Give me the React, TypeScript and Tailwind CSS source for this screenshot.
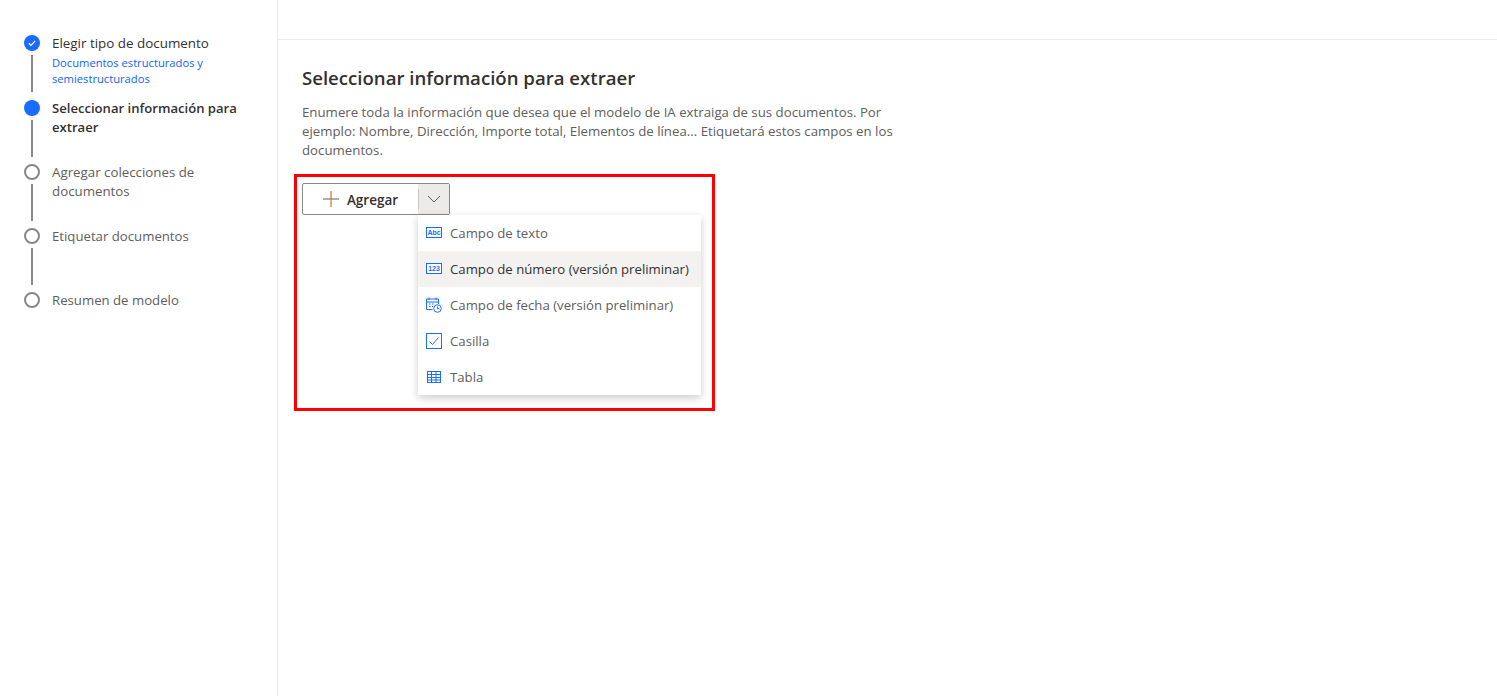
import React from "react";

const font = { fontFamily: '"Open Sans", "Noto Sans", sans-serif' };

function Check() {
  return (
    <svg width="16" height="16" viewBox="0 0 16 16" fill="none">
      <circle cx="8" cy="8" r="8" fill="#1a6cff" />
      <path d="M4.8 8.2 7 10.3 11.2 5.8" stroke="#fff" strokeWidth="1.2" />
    </svg>
  );
}

type StepProps = {
  state: "done" | "active" | "todo";
  last?: boolean;
  h: string;
  children: React.ReactNode;
};

function Step({ state, last, h, children }: StepProps) {
  return (
    <div className={`flex ${h}`}>
      <div className="flex w-[16px] flex-col items-center">
        {state === "done" && <Check />}
        {state === "active" && <div className="h-[16px] w-[16px] shrink-0 rounded-full bg-[#1a6cff]" />}
        {state === "todo" && <div className="h-[16px] w-[16px] shrink-0 rounded-full border-2 border-[#8a8886]" />}
        {!last && <div className="mt-[4px] h-[37px] w-[2px] bg-[#8a8886]" />}
      </div>
      <div className="ml-[12px] w-[195px]">{children}</div>
    </div>
  );
}

const iconBlue = "#1a6cff";

function AbcIcon() {
  return (
    <svg width="16" height="16" viewBox="0 0 16 16" fill="none">
      <rect x="0.5" y="2.5" width="15" height="10" fill="#fff" stroke={iconBlue} />
      <text x="8" y="10.2" textAnchor="middle" fontSize="7" fontWeight="700" fill={iconBlue} fontFamily="Liberation Sans">Abc</text>
    </svg>
  );
}
function NumIcon() {
  return (
    <svg width="16" height="16" viewBox="0 0 16 16" fill="none">
      <rect x="0.5" y="2.5" width="15" height="10" fill="#fff" stroke={iconBlue} />
      <text x="8" y="10.2" textAnchor="middle" fontSize="7" fontWeight="700" fill={iconBlue} fontFamily="Liberation Sans">123</text>
    </svg>
  );
}
function DateIcon() {
  return (
    <svg width="16" height="16" viewBox="0 0 16 16" fill="none" stroke={iconBlue}>
      <path d="M6.5 12.5H.5V2h12v5" />
      <path d="M.5 5h12" />
      <path d="M3 .5v2.5M10 .5v2.5" />
      <path d="M3 7h1.5M6 7h1.5M3 9.5h1.5M6 9.5h1" />
      <circle cx="11.5" cy="11.5" r="3.8" fill="#fff" />
      <path d="M11.5 9.5v2.2h2" />
    </svg>
  );
}
function BoxIcon() {
  return (
    <svg width="16" height="16" viewBox="0 0 16 16" fill="none" stroke={iconBlue}>
      <rect x="0.5" y="0.5" width="15" height="15" />
      <path d="M3.5 8.5 6.5 11.5 12.5 4.5" />
    </svg>
  );
}
function TableIcon() {
  return (
    <svg width="16" height="16" viewBox="0 0 16 16" fill="none" stroke={iconBlue}>
      <rect x="1.5" y="2.5" width="13" height="11" />
      <path d="M1.5 5.5h13M1.5 8.5h13M1.5 11h13M5.5 2.5v11M10 2.5v11" />
    </svg>
  );
}

const items: { label: string; icon: React.ReactNode; hover?: boolean }[] = [
  { label: "Campo de texto", icon: <AbcIcon /> },
  { label: "Campo de número (versión preliminar)", icon: <NumIcon />, hover: true },
  { label: "Campo de fecha (versión preliminar)", icon: <DateIcon /> },
  { label: "Casilla", icon: <BoxIcon /> },
  { label: "Tabla", icon: <TableIcon /> },
];

export default function App() {
  return (
    <div className="flex h-[696px] w-[1497px] overflow-hidden bg-white text-[13.2px] text-[#605e5c]" style={font}>
      <aside className="h-full w-[278px] shrink-0 border-r border-[#edebe9] pl-[24px] pt-[35px]">
        <Step state="done" h="h-[65px]">
          <div className="text-[13.4px] leading-[16px] text-[#323130]">Elegir tipo de documento</div>
          <div className="mt-[4px] text-[11.2px] leading-[16px] text-[#0f62fe]">Documentos estructurados y semiestructurados</div>
        </Step>
        <Step state="active" h="h-[64px]">
          <div className="-mt-px text-[13.1px] font-semibold leading-[19px] text-[#323130]">Seleccionar información para extraer</div>
        </Step>
        <Step state="todo" h="h-[64px]">
          <div className="-mt-px text-[13.3px] leading-[19px]">Agregar colecciones de documentos</div>
        </Step>
        <Step state="todo" h="h-[64px]">
          <div className="-mt-px text-[13.2px] leading-[19px]">Etiquetar documentos</div>
        </Step>
        <Step state="todo" last h="h-[20px]">
          <div className="-mt-px text-[13.2px] leading-[19px]">Resumen de modelo</div>
        </Step>
      </aside>
      <main className="flex min-w-0 flex-1 flex-col">
        <div className="h-[40px] shrink-0 border-b border-[#edebe9]" />
        <div className="pl-[24px] pt-[24px]">
          <h1 className="text-[18.6px] font-semibold leading-[28px] text-[#323130]">Seleccionar información para extraer</h1>
          <p className="mt-[11px] w-[600px] text-[13.25px] leading-[19px]">
            Enumere toda la información que desea que el modelo de IA extraiga de sus documentos. Por ejemplo: Nombre, Dirección, Importe total, Elementos de línea... Etiquetará estos campos en los documentos.
          </p>
        </div>
        <div className="relative ml-[16px] mt-[14px] h-[237px] w-[421px] border-[3px] border-[#ff0000] pl-[5px] pt-[6px]">
          <div className="flex h-[32px] w-[148px] items-stretch rounded-[2px] border border-[#8a8886] bg-white">
            <div className="flex w-[115px] items-center justify-center gap-[8px] pl-[1px] text-[13.5px] font-semibold text-[#323130]">
              <svg width="16" height="16" viewBox="0 0 16 16" fill="none" className="-ml-[1px]">
                <path d="M0 8h16" stroke="#7a7876" strokeWidth="1.2" />
                <path d="M8 0v16" stroke="#c9742f" strokeWidth="1.2" />
              </svg>
              <span className="pt-[2px]">Agregar</span>
            </div>
            <div className="flex flex-1 items-center bg-[#edebe9]">
              <div className="h-[20px] w-px bg-[#c8c6c4]" />
              <div className="flex flex-1 items-center justify-center">
                <svg width="14" height="8" viewBox="0 0 14 8" fill="none">
                  <path d="M1 1l6 6 6-6" stroke="#605e5c" />
                </svg>
              </div>
            </div>
          </div>
          <div className="absolute left-[121px] top-[38px] w-[283px] bg-white shadow-[0_3px_8px_rgba(0,0,0,0.2)]">
            {items.map((it) => (
              <div
                key={it.label}
                className={`flex h-[36px] items-center gap-[8px] pl-[8px] ${it.hover ? "bg-[#f3f2f1] text-[#323130]" : ""}`}
              >
                {it.icon}
                <span className="whitespace-nowrap pt-[2px]">{it.label}</span>
              </div>
            ))}
          </div>
        </div>
      </main>
    </div>
  );
}
